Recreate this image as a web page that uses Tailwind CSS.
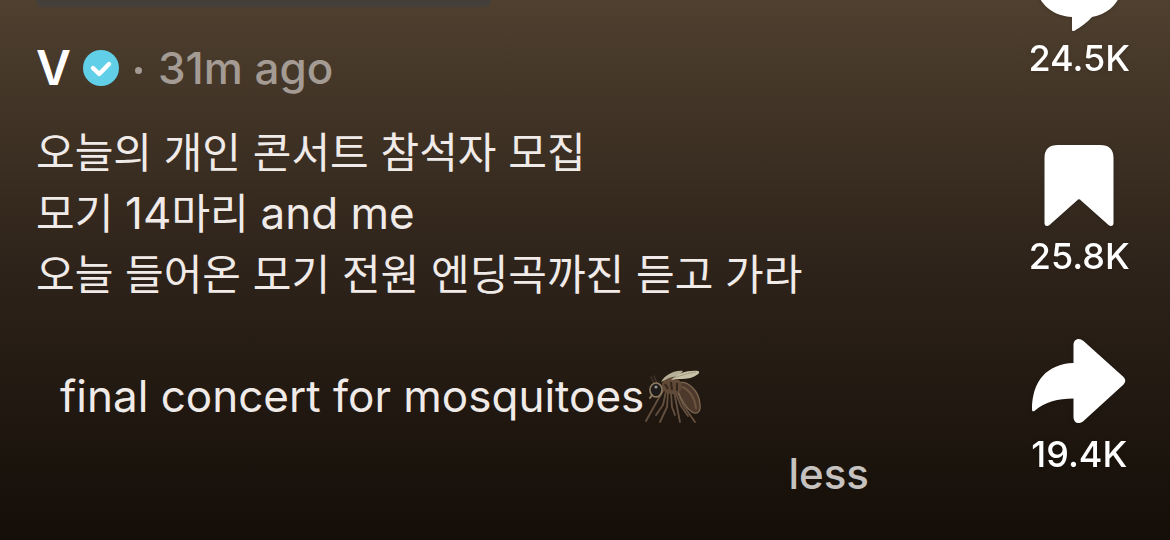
<!DOCTYPE html>
<html lang="ko">
<head>
    <meta charset="UTF-8">
    <meta name="viewport" content="width=device-width, initial-scale=1.0">
    <title>V - 31m ago</title>
    <script src="https://cdn.jsdelivr.net/npm/@tailwindcss/browser@4"></script>
</head>
<body class="min-h-screen overflow-hidden bg-[#140e08] bg-linear-to-b from-[#4f402f] via-[#2e231a] to-[#140e08] font-['Inter','Noto_Sans_CJK_KR',sans-serif] text-white">

    <main class="flex min-h-screen items-start justify-between overflow-hidden pl-9 pr-10">

        <!-- Post info -->
        <section class="min-w-0 flex-1">
            <div class="h-[7px] w-[455px] rounded-b-md bg-[#443f3a]"></div>

            <header class="mt-8 flex h-[58px] items-center">
                <a href="#" class="text-5xl font-semibold">V</a>
                <svg class="ml-3 size-9" viewBox="0 0 36 36" role="img" aria-label="Verified">
                    <circle cx="18" cy="18" r="18" fill="#62cfe8"/>
                    <path d="M10 18l6.200 6L26 14" fill="none" stroke="#fff" stroke-width="4.400" stroke-linecap="round" stroke-linejoin="round"/>
                </svg>
                <span class="ml-4 mt-1 size-[7px] rounded-full bg-[#a39b94]"></span>
                <time class="ml-4 text-[44px] font-medium text-[#a39b94]">31m ago</time>
            </header>

            <!-- Caption -->
            <div class="mt-[25px] text-[42px] leading-[61px] text-[#f0ebe8]">
                <p>오늘의 개인 콘서트 참석자 모집</p>
                <p>모기 <span class="text-[44px]">14</span>마리 <span class="text-[44px]">and me</span></p>
                <p>오늘 들어온 모기 전원 엔딩곡까진 듣고 가라</p>
                <p class="mt-[61px] flex items-center pl-6">
                    <span class="text-[44px]">final concert for mosquitoes</span>
                    <svg class="h-14 w-[60px]" viewBox="0 0 60 56" role="img" aria-label="Mosquito">
                        <g fill="none" stroke="#65503f" stroke-width="1.8" stroke-linecap="round" stroke-linejoin="round">
                            <path d="M20 20L12 34 2 52"/>
                            <path d="M22 22L19 36 12 46"/>
                            <path d="M24 23L23 38 16 53"/>
                            <path d="M27 23L28 38 31 46"/>
                            <path d="M30 22L33 38 36 53"/>
                            <path d="M33 22L39 36 51 53"/>
                            <path d="M31 22L37 37 44 47"/>
                            <path d="M10 14L7 8M13 14L10 7" stroke="#44362c" stroke-width="1.4"/>
                        </g>
                        <path d="M34 14C44 11 55 22 56 35 57 43 53 46 48 43 41 39 36 28 33 20Z" fill="#4d392b" stroke="#7d6750" stroke-width="1.3"/>
                        <path d="M38 18C45 20 51 29 52 40" fill="none" stroke="#6b533f" stroke-width="2"/>
                        <path d="M18 14C22 7 32 7 36 12 40 17 37 25 30 25 23 26 16 21 18 14Z" fill="#604936"/>
                        <path d="M21 15L24 20M27 13L28 21M33 14L33 22" stroke="#34251b" stroke-width="2"/>
                        <path d="M17 13C22 5 31 1 39 2 36 6 31 8 25 9Z" fill="#b8b096"/>
                        <path d="M27 11C34 4 44 1 54 2 57 3 54 6 49 8 42 11 34 9 27 11Z" fill="#c9c2a8"/>
                        <path d="M30 9C38 6 45 4 52 3" fill="none" stroke="#a79d82" stroke-width="1"/>
                        <ellipse cx="12" cy="21" rx="6" ry="7" fill="#1e1b19" stroke="#8f7c63" stroke-width="1.6"/>
                        <circle cx="12" cy="18" r="1.6" fill="#8f9492"/>
                        <path d="M8 26L6 29" stroke="#8f7c63" stroke-width="2" stroke-linecap="round"/>
                    </svg>
                </p>
            </div>

            <div class="mt-[17px] flex max-w-[833px] justify-end">
                <button type="button" class="text-[42px] leading-[60px] font-medium text-[#c5c2c0]">less</button>
            </div>
        </section>

        <!-- Action buttons -->
        <aside class="-mt-[60px] flex flex-col items-center gap-[58px] text-4xl leading-[44px] font-medium">
            <button type="button" class="flex flex-col items-center drop-shadow-sm" aria-label="Comments 24.5K">
                <svg class="size-24" viewBox="0 0 96 96" fill="#fff">
                    <path d="M48 6C23 6 4 22 4 40c0 20 15 36 37 37V89.500c0 1.500 1 2 2.500 1.200C50 87 56 82.500 61 77 79 74 92 60 92 40 92 22 73 6 48 6Z"/>
                </svg>
                <span>24.5K</span>
            </button>
            <button type="button" class="flex flex-col items-center drop-shadow-sm" aria-label="Save 25.8K">
                <svg class="size-24" viewBox="0 0 96 96" fill="#fff">
                    <path d="M13.500 20C13.500 11 18 7 27 7H69C78 7 82.500 11 82.500 20V85C82.500 88 80 89 77.500 87L50 62.500Q48 60 46 62.500L18.500 87C16 89 13.500 88 13.500 85Z"/>
                </svg>
                <span>25.8K</span>
            </button>
            <button type="button" class="flex flex-col items-center drop-shadow-sm" aria-label="Share 19.4K">
                <svg class="size-24" viewBox="0 0 96 96" fill="#fff">
                    <path d="M42.500 27V9C42.500 3 48 1 52.500 5L92 40.500C95 43.500 95 46 92 49L52.500 85C48 89 42.500 87 42.500 81V62.500C27 62.500 14 66 4 74.500 2.500 76 1 75.500 1 73.500 1 45 16 28 42.500 27Z"/>
                </svg>
                <span>19.4K</span>
            </button>
        </aside>
    </main>
</body>
</html>
